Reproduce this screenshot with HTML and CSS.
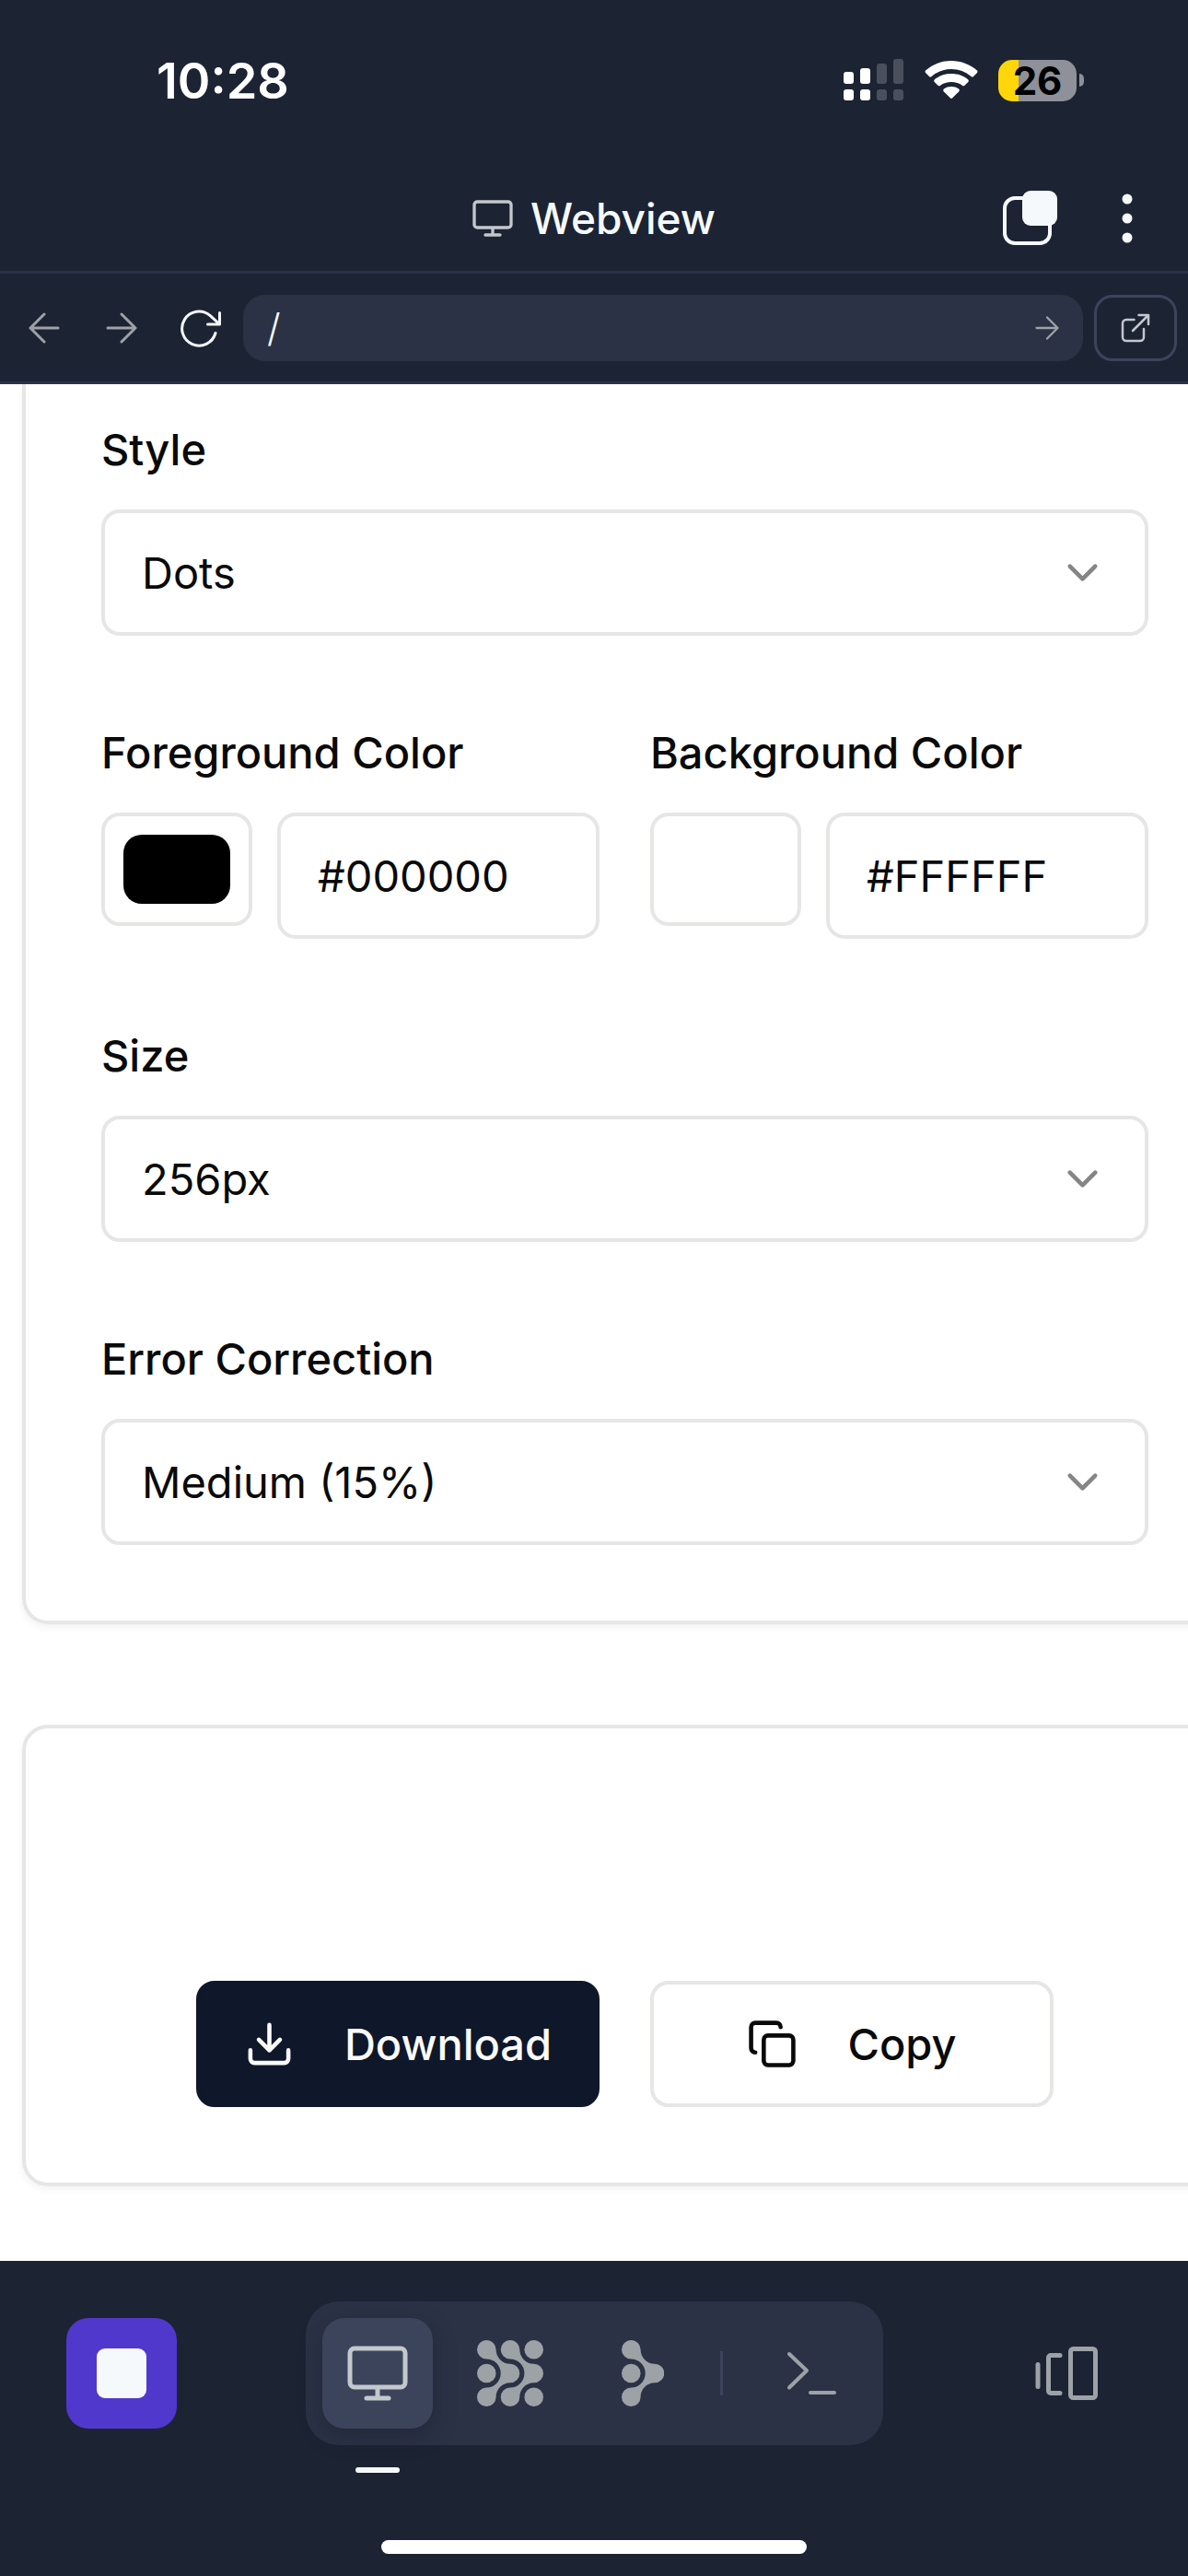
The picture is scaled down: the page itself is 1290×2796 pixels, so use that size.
FILE: index.html
```html
<!DOCTYPE html>
<html lang="en">
<head>
<meta charset="utf-8">
<meta name="viewport" content="width=device-width, initial-scale=1">
<title>Webview</title>
<link rel="stylesheet" href="styles.css">
</head>
<body>
<svg class="symbols" aria-hidden="true">
  <symbol id="monitor" viewBox="0 0 66 60">
    <g fill="none" stroke="currentColor" stroke-width="5" stroke-linecap="round" stroke-linejoin="round">
      <rect x="3" y="3" width="60" height="42" rx="5"/>
      <path d="M33 46v11M21 57h24"/>
    </g>
  </symbol>
  <symbol id="arrow-right" viewBox="0 0 34 34">
    <path d="M2 17h30M17 2l15 15-15 15" fill="none" stroke="currentColor" stroke-width="3" stroke-linecap="round" stroke-linejoin="round"/>
  </symbol>
  <symbol id="chevron" viewBox="0 0 24 24">
    <path d="M6 9l6 6 6-6" fill="none" stroke="currentColor" stroke-width="2" stroke-linecap="round" stroke-linejoin="round"/>
  </symbol>
</svg>

<div class="status">
  <span class="status-time">10:28</span>
  <div class="status-icons">
    <svg width="66" height="46" viewBox="0 0 66 46" fill="#fff">
      <rect x="0" y="14" width="11" height="13" rx="3"/><rect x="18" y="10" width="11" height="17" rx="3"/>
      <rect x="0" y="33" width="11" height="12" rx="3"/><rect x="18" y="33" width="11" height="12" rx="3"/>
      <g fill="#4a4f5d"><rect x="36" y="5" width="11" height="22" rx="3"/><rect x="54" y="0" width="11" height="27" rx="3"/>
      <rect x="36" y="33" width="11" height="12" rx="3"/><rect x="54" y="33" width="11" height="12" rx="3"/></g>
    </svg>
    <svg width="58" height="44" viewBox="0 0 58 44" fill="#fff">
      <path d="M1 14a2 2 0 0 1 0-2.400C9 4.500 18.500 1 29 1s20 3.500 28 10.600a2 2 0 0 1 0 2.400l-4 4a2 2 0 0 1-2.500 0C44.500 12.800 37 10 29 10S13.500 12.800 7.500 18a2 2 0 0 1-2.500 0z"/>
      <path d="M10.700 24a2 2 0 0 1 0-2.600C16 17 22 15 29 15s13 2 18.300 6.400a2 2 0 0 1 0 2.600l-3.800 3.800a2 2 0 0 1-2.600 0C37.500 25.200 33.500 24 29 24s-8.500 1.200-11.900 3.800a2 2 0 0 1-2.600 0z"/>
      <path d="M20.700 34.300a2 2 0 0 1 .2-2.800C23 29.800 26 29 29 29s6 .8 8.100 2.500a2 2 0 0 1 .2 2.800l-7.300 7.300a1.500 1.500 0 0 1-2 0z"/>
    </svg>
    <div class="battery"><span class="battery-body">26</span><span class="battery-tip"></span></div>
  </div>
</div>

<header class="titlebar">
  <h1 class="title"><svg class="title-icon"><use href="#monitor"/></svg>Webview</h1>
  <div class="title-actions">
    <button class="icon-button" type="button" aria-label="Tabs">
      <svg width="60" height="60" viewBox="0 0 60 60"><rect x="2" y="8" width="49" height="49" rx="11" fill="none" stroke="#f5f9fc" stroke-width="4"/><rect x="21" y="0" width="38" height="38" rx="9" fill="#f5f9fc"/></svg>
    </button>
    <button class="icon-button" type="button" aria-label="More">
      <svg width="12" height="54" viewBox="0 0 12 54" fill="#f5f9fc"><circle cx="6" cy="6" r="5.500"/><circle cx="6" cy="27" r="5.500"/><circle cx="6" cy="48" r="5.500"/></svg>
    </button>
  </div>
</header>

<form class="urlbar">
  <button class="nav-button" type="button" aria-label="Back"><svg width="34" height="34" viewBox="0 0 34 34"><path d="M32 17H2M17 2L2 17l15 15" fill="none" stroke="currentColor" stroke-width="3" stroke-linecap="round" stroke-linejoin="round"/></svg></button>
  <button class="nav-button" type="button" aria-label="Forward"><svg width="34" height="34"><use href="#arrow-right"/></svg></button>
  <button class="nav-button nav-reload" type="button" aria-label="Reload"><svg width="50" height="42" viewBox="-4 0 50 42"><path d="M39 26.500A18.500 18.500 0 1 1 33 7.400L43.500 17M30.500 17h13V4.500" fill="none" stroke="currentColor" stroke-width="3" stroke-linecap="round" stroke-linejoin="round"/></svg></button>
  <div class="address">
    <input class="address-input" type="text" aria-label="Address" value="/">
    <button class="address-go" type="submit" aria-label="Go"><svg width="26" height="26"><use href="#arrow-right"/></svg></button>
  </div>
  <button class="open-button" type="button" aria-label="Open in new tab"><svg width="32" height="32" viewBox="0 0 32 32"><path d="M14.500 7H6a4 4 0 0 0-4 4v15a4 4 0 0 0 4 4h15a4 4 0 0 0 4-4v-9M19.500 2H30v10M30 2L13 19" fill="none" stroke="currentColor" stroke-width="2.500" stroke-linecap="round" stroke-linejoin="round"/></svg></button>
</form>

<main class="page">
  <section class="card card-options">
    <div class="field">
      <label class="label" for="style">Style</label>
      <div class="select-wrap">
        <select class="control" id="style"><option>Dots</option></select>
        <svg class="chevron"><use href="#chevron"/></svg>
      </div>
    </div>
    <div class="colors">
      <div class="field">
        <label class="label" for="fg">Foreground Color</label>
        <div class="color-row">
          <input class="swatch" type="color" value="#000000" aria-label="Pick foreground color">
          <input class="control" id="fg" type="text" value="#000000">
        </div>
      </div>
      <div class="field">
        <label class="label" for="bg">Background Color</label>
        <div class="color-row">
          <input class="swatch" type="color" value="#ffffff" aria-label="Pick background color">
          <input class="control" id="bg" type="text" value="#FFFFFF">
        </div>
      </div>
    </div>
    <div class="field">
      <label class="label" for="size">Size</label>
      <div class="select-wrap">
        <select class="control" id="size"><option>256px</option></select>
        <svg class="chevron"><use href="#chevron"/></svg>
      </div>
    </div>
    <div class="field">
      <label class="label" for="ecc">Error Correction</label>
      <div class="select-wrap">
        <select class="control" id="ecc"><option>Medium (15%)</option></select>
        <svg class="chevron"><use href="#chevron"/></svg>
      </div>
    </div>
  </section>

  <section class="card card-result">
    <div class="preview"></div>
    <div class="actions">
      <button class="action action-primary" type="button">
        <svg class="action-icon" viewBox="0 0 24 24"><path d="M21 15v4a2 2 0 0 1-2 2H5a2 2 0 0 1-2-2v-4M7 10l5 5 5-5M12 15V3"/></svg>Download
      </button>
      <button class="action" type="button">
        <svg class="action-icon" viewBox="0 0 24 24"><rect x="8" y="8" width="14" height="14" rx="2"/><path d="M4 16c-1.100 0-2-.9-2-2V4c0-1.100.9-2 2-2h10c1.100 0 2 .9 2 2"/></svg>Copy
      </button>
    </div>
  </section>
</main>

<footer class="dock">
  <div class="dock-row">
    <button class="dock-button dock-stop" type="button" aria-label="Stop"><span class="stop-square"></span></button>
    <nav class="tabs" aria-label="Panels">
      <button class="dock-button tab-active" type="button" aria-label="Webview"><svg width="66" height="60"><use href="#monitor"/></svg></button>
      <button class="dock-button" type="button" aria-label="Assistant">
        <svg width="72" height="72" viewBox="0 0 72 72" fill="currentColor">
          <path id="bond" d="M20.600 10.300A15.400 15.400 0 0 0 36 25.700A10.300 10.300 0 0 1 36 46.300A15.400 15.400 0 0 0 20.600 61.700A10.300 10.300 0 1 1 10.300 51.400A15.400 15.400 0 0 0 10.300 20.600A10.300 10.300 0 1 1 20.600 10.300Z"/>
          <use href="#bond" x="25.700"/>
          <circle cx="10.300" cy="36" r="10.300"/><circle cx="61.700" cy="10.300" r="10.300"/><circle cx="61.700" cy="61.700" r="10.300"/>
        </svg>
      </button>
      <button class="dock-button" type="button" aria-label="Agent">
        <svg width="46" height="72" viewBox="0 0 46 72" fill="currentColor"><use href="#bond"/><circle cx="10.300" cy="36" r="10.300"/></svg>
      </button>
      <span class="tabs-divider"></span>
      <button class="dock-button" type="button" aria-label="Shell">
        <svg width="54" height="48" viewBox="0 0 54 48"><path d="M3 3l19 18L3 39.500M26 45h26" fill="none" stroke="currentColor" stroke-width="4" stroke-linecap="round" stroke-linejoin="round"/></svg>
      </button>
    </nav>
    <button class="dock-button" type="button" aria-label="Switch panel">
      <svg width="68" height="58" viewBox="0 0 68 58"><path d="M3 19.500v24M27 9.500H17a2.500 2.500 0 0 0-2.500 2.500v36a2.500 2.500 0 0 0 2.500 2.500h10" fill="none" stroke="currentColor" stroke-width="5" stroke-linecap="round"/><rect x="38.500" y="2.500" width="27" height="53" rx="3" fill="none" stroke="currentColor" stroke-width="5"/></svg>
    </button>
  </div>
  <span class="home-bar"></span>
</footer>
</body>
</html>
```
FILE: styles.css
```css
* { box-sizing: border-box; }

body {
  margin: 0;
  min-height: 100vh;
  display: flex;
  flex-direction: column;
  background: #1c2333;
  color: #0a0a0a;
  font-family: Inter, "Liberation Sans", sans-serif;
  font-size: 47px;
  overflow-x: hidden;
}

button, input, select { font: inherit; color: inherit; margin: 0; }
button { border: 0; padding: 0; background: none; }
svg { display: block; flex: none; }
.symbols { position: absolute; width: 0; height: 0; }

/* Status bar */
.status {
  height: 180px;
  padding: 0 113px 6px 170px;
  display: flex;
  align-items: center;
  justify-content: space-between;
  color: #fff;
}
.status-time { font-size: 54px; font-weight: 600; }
.status-icons { display: flex; align-items: center; gap: 22px; }
.battery { display: flex; align-items: center; gap: 3px; }
.battery-body {
  width: 85px;
  height: 45px;
  border-radius: 15px;
  background: linear-gradient(90deg, #ffd60a 22px, #8e9199 22px);
  color: #000;
  font-size: 42px;
  font-weight: 700;
  line-height: 45px;
  text-align: center;
}
.battery-tip { width: 5px; height: 14px; border-radius: 0 7px 7px 0; background: #8e9199; }

/* Title bar */
.titlebar {
  height: 117px;
  padding: 0 60px;
  display: grid;
  grid-template-columns: 1fr auto 1fr;
  align-items: center;
  border-bottom: 3px solid #2b3245;
  color: #f5f9fc;
}
.title {
  grid-column: 2;
  margin: 0;
  display: flex;
  align-items: center;
  gap: 19px;
  font-size: 46px;
  font-weight: 500;
}
.title-icon { width: 44px; height: 40px; color: #c2c8cc; }
.title-actions { display: flex; align-items: center; justify-content: flex-end; gap: 69px; }

/* Address row */
.urlbar {
  height: 120px;
  padding: 0 12px 0 6px;
  display: flex;
  align-items: center;
  border-bottom: 3px solid #2b3245;
}
.nav-button { width: 84px; height: 72px; display: grid; place-items: center; color: #9da2a6; }
.nav-reload { color: #f5f9fc; }
.address {
  flex: 1;
  min-width: 0;
  height: 72px;
  margin: 0 12px 0 6px;
  padding: 0 26px;
  display: flex;
  align-items: center;
  border-radius: 24px;
  background: #2b3245;
  color: #9da2a6;
}
.address-input { flex: 1; min-width: 0; border: 0; padding: 0; background: none; color: #f5f9fc; font-size: 42px; font-weight: 300; }
.open-button {
  width: 90px;
  height: 72px;
  display: grid;
  place-items: center;
  border: 3px solid #3c445c;
  border-radius: 20px;
  color: #c2c8cc;
}

/* Page inside the webview; its cards run past the right edge */
.page {
  flex: 1;
  padding: 0 0 81px 24px;
  display: flex;
  flex-direction: column;
  gap: 109px;
  background: #fff;
  overflow: hidden;
}
.card {
  margin-right: -43px;
  padding: 82px;
  border: 4px solid #e6e6e5;
  border-radius: 28px;
  box-shadow: 0 4px 8px rgba(0, 0, 0, 0.05);
}
.card-options {
  padding-top: 47px;
  border-top: 0;
  border-top-left-radius: 0;
  display: flex;
  flex-direction: column;
  gap: 103px;
}
.field { min-width: 0; display: flex; flex-direction: column; gap: 41px; }
.label { font-weight: 500; line-height: 48px; }
.colors { display: grid; grid-template-columns: 1fr 1fr; gap: 55px; }
.color-row { display: flex; align-items: flex-start; gap: 27px; }
.control {
  width: 100%;
  min-width: 0;
  height: 137px;
  padding: 0 40px;
  border: 4px solid #e6e6e5;
  border-radius: 20px;
  background: #fff;
  appearance: none;
}
.select-wrap { display: grid; align-items: center; }
.select-wrap > * { grid-area: 1 / 1; }
.chevron { width: 55px; height: 55px; margin-right: 44px; justify-self: end; color: #858585; pointer-events: none; }
.swatch {
  flex: none;
  width: 164px;
  height: 123px;
  padding: 20px;
  border: 4px solid #e6e6e5;
  border-radius: 20px;
  background: #fff;
  appearance: none;
}
.swatch::-webkit-color-swatch-wrapper { padding: 0; }
.swatch::-webkit-color-swatch { border: 0; border-radius: 20px; }

.preview { height: 192px; }
.actions { max-width: 931px; margin: 0 auto; display: grid; grid-template-columns: 1fr 1fr; gap: 55px; }
.action {
  height: 137px;
  display: flex;
  align-items: center;
  justify-content: center;
  gap: 54px;
  border: 4px solid #e6e6e5;
  border-radius: 20px;
  background: #fff;
  font-weight: 500;
}
.action-primary { border-color: #0f172a; background: #0f172a; color: #fafaf9; }
.action-icon {
  width: 55px;
  height: 55px;
  fill: none;
  stroke: currentColor;
  stroke-width: 2;
  stroke-linecap: round;
  stroke-linejoin: round;
}

/* Bottom dock */
.dock { padding: 44px 72px 24px; display: flex; flex-direction: column; color: #9da2a6; }
.dock-row { display: flex; align-items: center; justify-content: space-between; }
.dock-button { width: 120px; height: 120px; display: grid; place-items: center; border-radius: 24px; }
.dock-stop { background: #5138cc; }
.stop-square { width: 54px; height: 54px; border-radius: 9px; background: #f5f9fc; }
.tabs { padding: 18px; display: flex; align-items: center; gap: 24px; border-radius: 36px; background: #2b3245; }
.tab-active { position: relative; background: #3c445c; color: #c2c8cc; box-shadow: 0 8px 24px rgba(20, 22, 36, 0.35); }
.tab-active::after {
  content: "";
  position: absolute;
  left: 36px;
  top: 162px;
  width: 48px;
  height: 6px;
  border-radius: 3px;
  background: #f5f9fc;
}
.tabs-divider { width: 3px; height: 48px; margin-right: 12px; background: #3c445c; }
.home-bar { width: 462px; height: 15px; margin: 103px auto 0; border-radius: 8px; background: #fff; }
```
